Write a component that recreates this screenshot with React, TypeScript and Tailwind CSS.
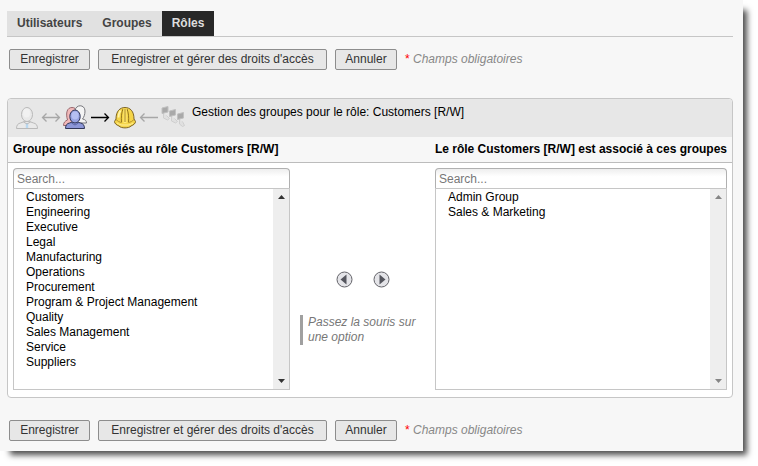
import { useState } from "react";

interface GroupListProps {
  label: string;
  groups: string[];
  scrollable?: boolean;
}

const TABS = ["Utilisateurs", "Groupes", "Rôles"];

const AVAILABLE_GROUPS = [
  "Customers",
  "Engineering",
  "Executive",
  "Legal",
  "Manufacturing",
  "Operations",
  "Procurement",
  "Program & Project Management",
  "Quality",
  "Sales Management",
  "Service",
  "Suppliers",
];

const ROLE_GROUPS = ["Admin Group", "Sales & Marketing"];

const UserIcon = () => (
  <svg className="h-6 w-6" viewBox="0 0 24 24" fill="#e9e9e9" stroke="#b9b9b9">
    <path d="M1.500 23.500c0-3.500 1.500-5 4-5.500l4-1.500h5l4 1.500c2.500.5 4 2 4 5.500z" />
    <path d="M10.800 18h2.400v5h-2.400z" fill="#b9d8f0" stroke="none" />
    <ellipse cx="12" cy="9.500" rx="5.500" ry="7" />
    <ellipse cx="11.500" cy="8" rx="3.500" ry="4.500" fill="#f1f1f1" stroke="none" />
    <path d="M8.500 17l3.500 2 3.500-2" fill="none" />
  </svg>
);

const GroupIcon = () => (
  <svg className="h-6 w-6" viewBox="0 0 24 24" stroke="#55555f">
    <path
      d="M.5 20.500c0-3 1.500-4.500 4-5.500C2.500 8 4 2.500 9 2.500s6 5 4 11v7z"
      fill="#f2b9b9"
      stroke="#98696f"
    />
    <path
      d="M12 17V6c.5-7 10-7 10 0 0 3.500-1 6-2.500 8 3 .5 4 2 4 4H14z"
      fill="#f4f4f4"
      stroke="#77777c"
    />
    <path
      d="M2.500 23.500c0-3.500 1.500-5 4-5.500l3-1h5l3 1c2.500.5 4 2 4 5.500z"
      fill="#8d97d8"
      stroke="#303657"
    />
    <ellipse cx="12" cy="11.500" rx="5.200" ry="6.500" fill="#97a2e2" stroke="#303657" />
    <ellipse cx="12" cy="10.500" rx="3.500" ry="4" fill="#b5bff2" stroke="none" />
    <path d="M8.500 18l3.500 2 3.500-2" fill="none" stroke="#5a65a8" />
  </svg>
);

const HelmetIcon = () => (
  <svg className="h-6 w-6" viewBox="0 0 24 24" fill="#f5d54a" stroke="#7d6527">
    <path d="M3 14C3 6 7 2.500 12 2.500S21 6 21 14l1.500 2.500c0 2-2 3.500-4.500 4.500-2 2.500-10 2.500-12 0-2.500-1-4.500-2.500-4.500-4.500z" />
    <path d="M3 14.500c1.500 1.500 3 2.500 5 3M21 14.500c-1.500 1.500-3 2.500-5 3" fill="none" stroke="#b8942e" />
    <path d="M5.500 12.500c0-3 .5-5 2-7" fill="none" stroke="#fff3a8" strokeWidth="2" />
    <path d="M8.500 17.500c-.5-5 0-10 1.500-13.500M15.500 17.500c.5-5 0-10-1.500-13.500" fill="none" stroke="#94751b" />
    <path d="M10.500 4h3v14h-3z" fill="#ffeb78" stroke="none" />
    <path d="M12 4v13" stroke="#ab8420" />
    <path d="M4 18c2 1.500 4 2 5 2h6c1 0 3-.5 5-2" fill="none" stroke="#fff09a" />
  </svg>
);

const RightsIcon = () => (
  <svg className="h-6 w-6" viewBox="0 0 24 24" fill="#a9a9a9" stroke="#c0c0c0">
    <path
      d="M2.500 8v5l4 2 2-1.500-3-3M10.500 11v5l4 2 2-1.500-3-3M18.500 14v5l3 2.500 2-1-2-4"
      fill="#e0e0e0"
      stroke="#cfcfcf"
    />
    <path d="M1 3l6-1.500v5.500L1 8.500zM8.500 6l6-1.500v5.500l-6 1.500zM16.500 9l6-1.500v5.500l-6 1.500z" />
  </svg>
);

const DoubleArrow = () => (
  <svg className="h-3 w-5" viewBox="0 0 20 12" fill="none" stroke="#a7a7a7" strokeWidth="1.300">
    <path d="M1.500 6.500h17M5.500 2.500l-4 4 4 4M14.500 2.500l4 4-4 4" />
  </svg>
);

const RightArrow = () => (
  <svg className="h-3 w-5" viewBox="0 0 20 12" fill="none" stroke="#000000" strokeWidth="1.300">
    <path d="M1 6.500h17.500M14.500 2.500l4 4-4 4" />
  </svg>
);

const LeftArrow = () => (
  <svg className="h-3 w-5" viewBox="0 0 20 12" fill="none" stroke="#a7a7a7" strokeWidth="1.300">
    <path d="M1.500 6.500H19M5.500 2.500l-4 4 4 4" />
  </svg>
);

const FormActions = () => (
  <div className="flex items-center gap-2 px-0.5">
    <button
      type="button"
      className="h-[21px] min-w-[81px] rounded-xs border border-[#8d8d8d] bg-[#e7e7e7] px-2 text-[#333333]"
    >
      Enregistrer
    </button>
    <button
      type="button"
      className="h-[21px] min-w-[229px] rounded-xs border border-[#8d8d8d] bg-[#e7e7e7] px-2 text-[#333333]"
    >
      Enregistrer et gérer des droits d'accès
    </button>
    <button
      type="button"
      className="h-[21px] min-w-[62px] rounded-xs border border-[#8d8d8d] bg-[#e7e7e7] px-2 text-[#333333]"
    >
      Annuler
    </button>
    <p className="italic text-[#888888]">
      <span className="not-italic text-[#ff0000]">*</span> Champs obligatoires
    </p>
  </div>
);

const GroupList = ({ label, groups, scrollable = false }: GroupListProps) => {
  const [search, setSearch] = useState("");
  const filtered = groups.filter((group) =>
    group.toLowerCase().includes(search.toLowerCase())
  );

  return (
    <div>
      <input
        type="text"
        aria-label={`Search: ${label}`}
        placeholder="Search..."
        value={search}
        onChange={(e) => setSearch(e.target.value)}
        className="block h-5 w-full rounded-t-sm border border-b-0 border-[#b0b0b0] bg-white bg-linear-to-b from-[#eeeeee] to-white to-40% px-[3px] placeholder:text-[#777777]"
      />
      <div className="flex h-[202px] border border-[#c6c6c6] bg-white">
        <select
          multiple
          aria-label={label}
          className="min-w-0 flex-1 appearance-none overflow-hidden pt-px outline-none"
        >
          {filtered.map((group) => (
            <option key={group} className="h-[15px] p-0 pl-3 leading-[15px]">
              {group}
            </option>
          ))}
        </select>
        <div
          className={`flex w-4 flex-col items-center justify-between bg-[#eeeeee] py-1.5 ${
            scrollable ? "text-[#333333]" : "text-[#858585]"
          }`}
        >
          <svg className="h-1 w-[7px]" viewBox="0 0 7 4" fill="currentColor">
            <path d="M0 4L3.500 0 7 4z" />
          </svg>
          <svg className="h-1 w-[7px]" viewBox="0 0 7 4" fill="currentColor">
            <path d="M0 0h7L3.500 4z" />
          </svg>
        </div>
      </div>
    </div>
  );
};

export default function App() {
  return (
    <div className="bg-white pr-[15px] pb-[15px] font-['Liberation_Sans',Arial,sans-serif] text-xs leading-[15px] text-black">
      <main className="bg-[#f7f7f7] pt-[11px] pr-2.5 pb-2.5 pl-[7px] shadow-[7px_7px_6px_-3px_rgba(0,0,0,0.7)]">
        <nav className="flex border-b border-[#c6c6c6] font-bold">
          {TABS.map((tab) => (
            <a
              key={tab}
              href="#"
              className={`px-2.5 py-[5px] ${
                tab === "Rôles"
                  ? "bg-[#282828] text-[#dddddd]"
                  : "bg-[#e1e1e1] text-[#444444]"
              }`}
            >
              {tab}
            </a>
          ))}
        </nav>

        <div className="mt-3">
          <FormActions />
        </div>

        <section className="mt-7 mb-[22px] rounded-sm border border-[#c6c6c6] bg-white">
          <div className="flex h-[38px] rounded-t-sm bg-[#e7e7e7] px-[7px] pt-1.5">
            <div className="flex h-6 items-center gap-px">
              <UserIcon />
              <div className="flex px-px">
                <DoubleArrow />
              </div>
              <GroupIcon />
              <div className="flex px-0.5">
                <RightArrow />
              </div>
              <HelmetIcon />
              <div className="flex px-px">
                <LeftArrow />
              </div>
              <RightsIcon />
            </div>
            <h1 className="ml-[7px]">
              Gestion des groupes pour le rôle: Customers [R/W]
            </h1>
          </div>
          <div className="flex h-[26px] items-center justify-between border-b border-[#bcbcbc] bg-[#f7f7f7] px-[5px] font-bold">
            <h2>Groupe non associés au rôle Customers [R/W]</h2>
            <h2>Le rôle Customers [R/W] est associé à ces groupes</h2>
          </div>
          <div className="grid grid-cols-[277fr_145fr_292fr] px-[5px] pt-[5px] pb-[7px]">
            <GroupList
              label="Groupe non associés au rôle Customers [R/W]"
              groups={AVAILABLE_GROUPS}
              scrollable
            />
            <div className="px-2.5 pt-[103px]">
              <div className="flex justify-center gap-5">
                <button type="button" aria-label="Retirer le groupe">
                  <svg className="h-[17px] w-[17px]" viewBox="0 0 17 17">
                    <circle cx="8.500" cy="8.500" r="7.500" fill="#e4e4e8" stroke="#64646a" />
                    <path d="M10.500 3.500v10l-6-5z" fill="#55565e" />
                  </svg>
                </button>
                <button type="button" aria-label="Ajouter le groupe">
                  <svg className="h-[17px] w-[17px]" viewBox="0 0 17 17">
                    <circle cx="8.500" cy="8.500" r="7.500" fill="#e4e4e8" stroke="#64646a" />
                    <path d="M6.500 3.500v10l6-5z" fill="#55565e" />
                  </svg>
                </button>
              </div>
              <p className="mt-[27px] border-l-3 border-[#a0a0a0] pl-[5px] italic text-[#777777]">
                Passez la souris sur une option
              </p>
            </div>
            <GroupList
              label="Le rôle Customers [R/W] est associé à ces groupes"
              groups={ROLE_GROUPS}
            />
          </div>
        </section>

        <FormActions />
      </main>
    </div>
  );
}
